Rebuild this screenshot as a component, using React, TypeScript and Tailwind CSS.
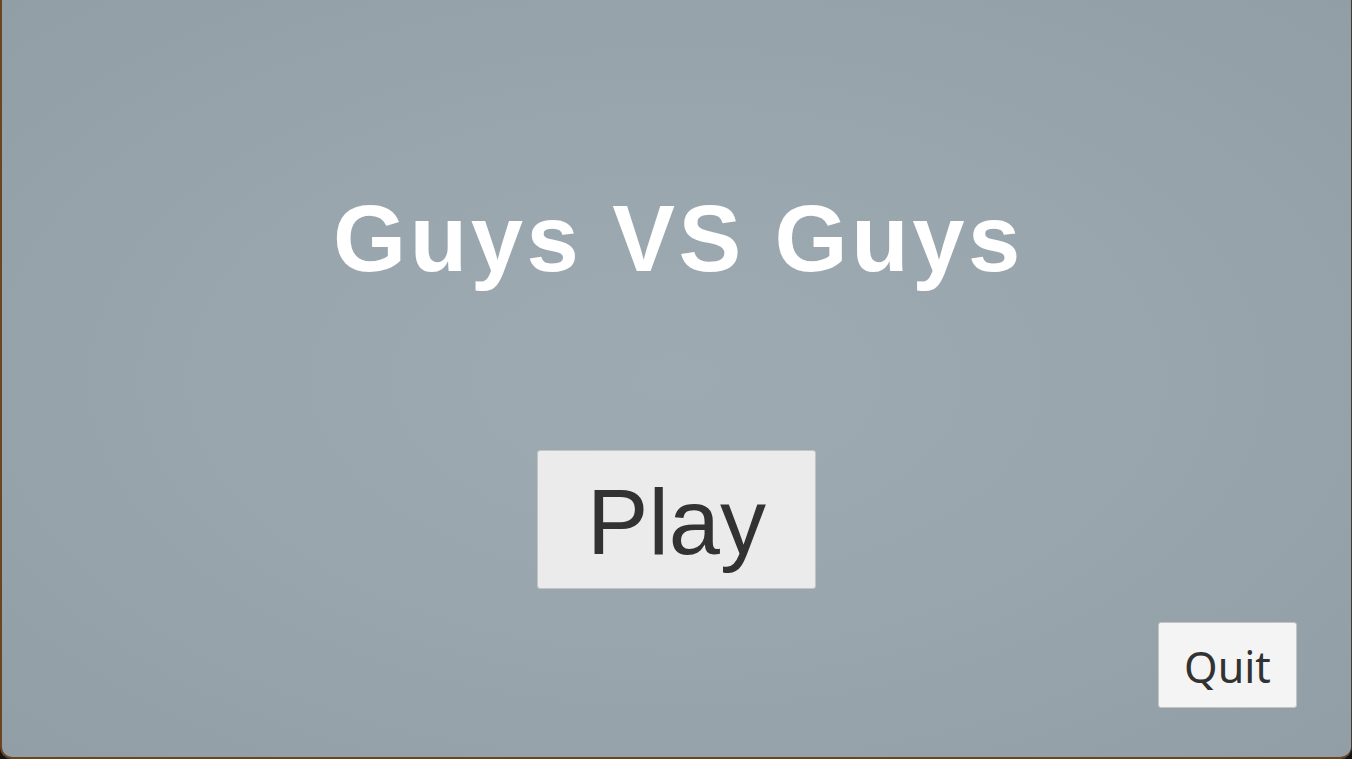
import React from "react";

function MenuButton({
  label,
  className,
}: {
  label: string;
  className: string;
}) {
  return (
    <button
      className={`flex items-center justify-center rounded-[3px] border border-[#c4c4c4] text-[#323232] leading-none ${className}`}
    >
      {label}
    </button>
  );
}

export default function App() {
  return (
    <div className="h-[759px] w-[1352px] bg-[#141414] overflow-hidden">
      {/* Main menu canvas */}
      <div className="flex h-full w-full flex-col rounded-b-[12px] border-l-2 border-b-2 border-r border-l-[#6a4520] border-b-[#6a4520] border-r-[#463c28] bg-[radial-gradient(ellipse_at_center,#9eaab1_0%,#9aa6ad_45%,#929ea6_100%)]">
        <h1 className="pt-[192px] pl-[4px] text-center text-[94px] font-bold leading-none tracking-[3.6px] text-white [font-family:'Liberation_Sans',Arial,sans-serif]">
          Guys VS Guys
        </h1>

        <div className="mt-[164px] flex justify-center">
          <MenuButton
            label="Play"
            className="h-[139px] w-[279px] pt-[4px] bg-[#ebebeb] text-[92px] [font-family:'Liberation_Sans',Arial,sans-serif]"
          />
        </div>

        <div className="mt-[33px] flex justify-end pr-[54px]">
          <MenuButton
            label="Quit"
            className="h-[86px] w-[139px] pt-[2px] bg-[#f4f4f4] text-[43px] [font-family:'Noto_Sans',sans-serif]"
          />
        </div>
      </div>
    </div>
  );
}
